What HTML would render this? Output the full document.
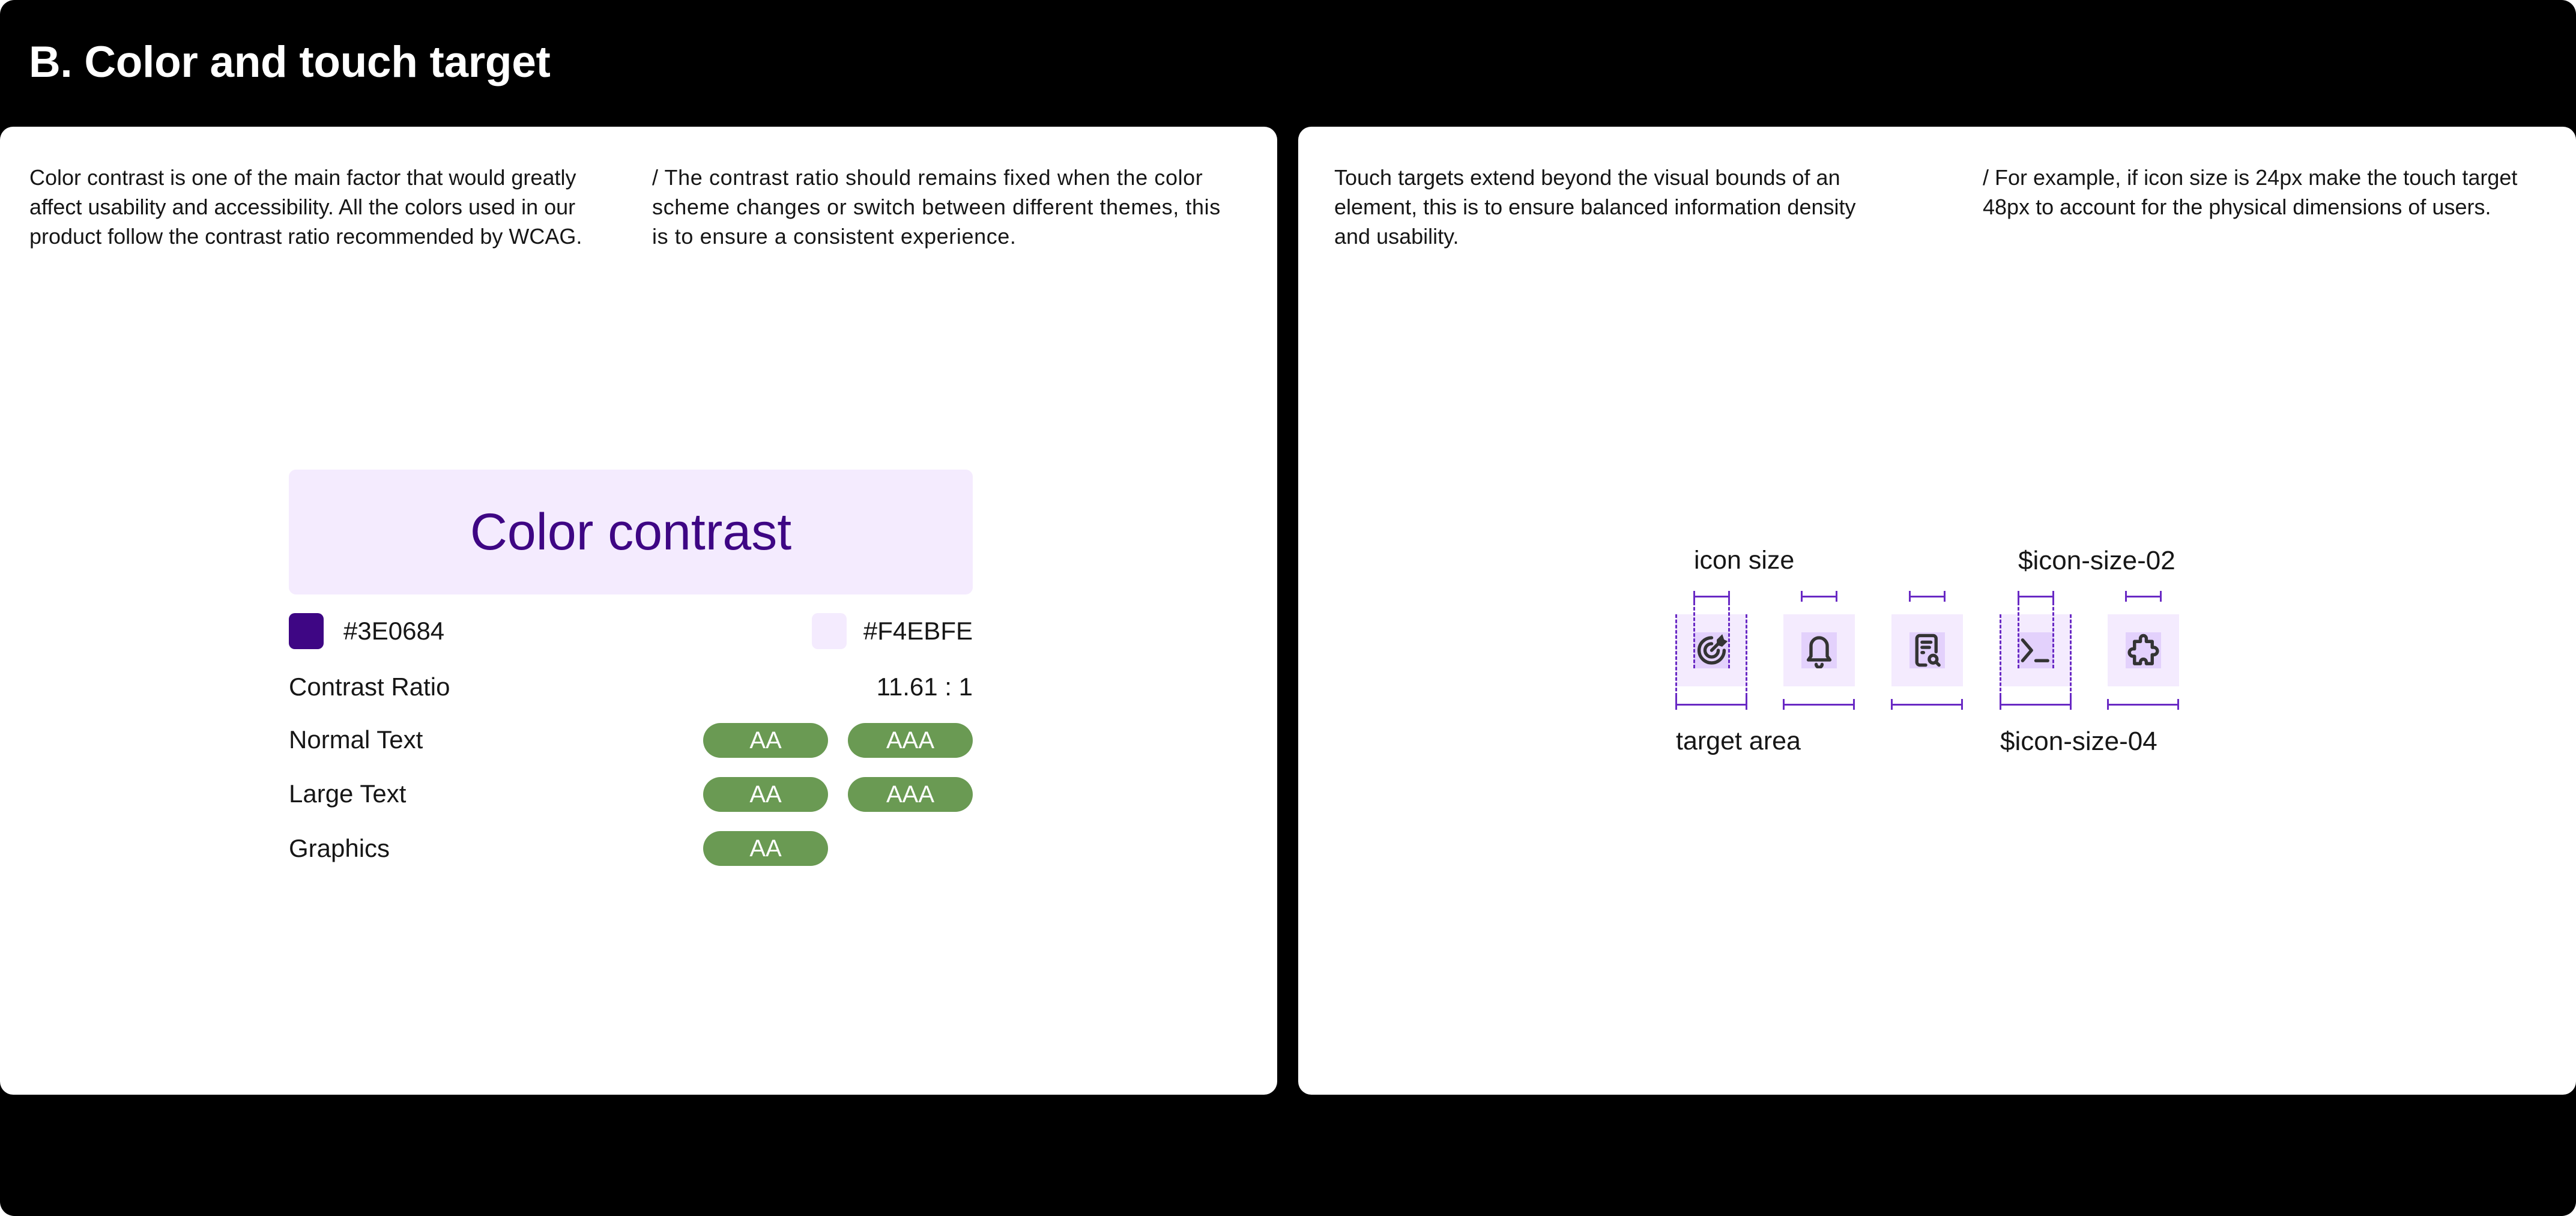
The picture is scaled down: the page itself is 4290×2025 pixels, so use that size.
<!DOCTYPE html>
<html><head><meta charset="utf-8"><style>
*{margin:0;padding:0;box-sizing:border-box}
html,body{width:4290px;height:2025px;background:#fff;overflow:hidden}
body{font-family:"Liberation Sans",sans-serif;color:#161616}
.frame{position:absolute;left:0;top:0;width:4290px;height:2025px;background:#000;border-radius:24px}
.card{position:absolute;top:211px;height:1612px;background:#fff;border-radius:22px}
.t{position:absolute;white-space:nowrap}
.p{font-size:36px;line-height:49px;color:#161616}
.lbl{font-size:42px;color:#161616}
.pill{position:absolute;width:208px;height:58px;border-radius:29px;background:#6A9A53;color:#fff;font-size:40px;line-height:58px;text-align:center}
.ob{position:absolute;width:119px;height:120px;background:#F4EBFE;top:1023px}
.ib{position:absolute;width:59px;height:60px;background:#E3D1FC;top:1053px}
.ib svg{width:59px;height:60px;display:block}
.hl{position:absolute;height:3px;background:#6929C4}
.vl{position:absolute;width:3px;background:#6929C4}
.dl{position:absolute;width:0;border-left:3px dashed #6929C4}
</style></head><body>
<div class="frame"></div>
<div class="t" style="left:48px;top:62px;font-size:73px;font-weight:bold;color:#fff;letter-spacing:-0.3px">B. Color and touch target</div>

<div class="card" style="left:0;width:2127px"></div>
<div class="card" style="left:2162px;width:2128px"></div>

<div class="t p" style="left:49px;top:271px">Color contrast is one of the main factor that would greatly<br>affect usability and accessibility. All the colors used in our<br>product follow the contrast ratio recommended by WCAG.</div>
<div class="t p" style="left:1086px;top:271px;letter-spacing:0.6px">/ The contrast ratio should remains fixed when the color<br>scheme changes or switch between different themes, this<br>is to ensure a consistent experience.</div>
<div class="t p" style="left:2222px;top:271px">Touch targets extend beyond the visual bounds of an<br>element, this is to ensure balanced information density<br>and usability.</div>
<div class="t p" style="left:3302px;top:271px">/ For example, if icon size is 24px make the touch target<br>48px to account for the physical dimensions of users.</div>

<!-- Color contrast -->
<div style="position:absolute;left:481px;top:782px;width:1139px;height:208px;background:#F4EBFE;border-radius:12px;color:#3E0684;font-size:86px;line-height:208px;text-align:center">Color contrast</div>
<div style="position:absolute;left:481px;top:1021px;width:58px;height:60px;background:#3E0684;border-radius:10px"></div>
<div class="t lbl" style="left:572px;top:1027px">#3E0684</div>
<div style="position:absolute;left:1352px;top:1021px;width:58px;height:60px;background:#F4EBFE;border-radius:10px"></div>
<div class="t lbl" style="right:2670px;top:1027px">#F4EBFE</div>
<div class="t lbl" style="left:481px;top:1120px">Contrast Ratio</div>
<div class="t lbl" style="right:2670px;top:1120px">11.61 : 1</div>
<div class="t lbl" style="left:481px;top:1208px">Normal Text</div>
<div class="t lbl" style="left:481px;top:1298px">Large Text</div>
<div class="t lbl" style="left:481px;top:1389px">Graphics</div>
<div class="pill" style="left:1171px;top:1204px">AA</div>
<div class="pill" style="left:1412px;top:1204px">AAA</div>
<div class="pill" style="left:1171px;top:1294px">AA</div>
<div class="pill" style="left:1412px;top:1294px">AAA</div>
<div class="pill" style="left:1171px;top:1384px">AA</div>

<!-- Touch target -->
<div class="t lbl" style="left:2821px;top:909px;font-size:43px">icon size</div>
<div class="t lbl" style="left:3361px;top:909px;font-size:44px">$icon-size-02</div>
<div class="t lbl" style="left:2791px;top:1210px;font-size:43px">target area</div>
<div class="t lbl" style="left:3331px;top:1210px;font-size:44px">$icon-size-04</div>

<div class="ob" style="left:2791px"></div>
<div class="ob" style="left:2970px"></div>
<div class="ob" style="left:3150px"></div>
<div class="ob" style="left:3331px"></div>
<div class="ob" style="left:3510px"></div>

<div class="ib" style="left:2821px"><svg viewBox="0 0 24 24" fill="none" stroke="#333" stroke-width="2.2" stroke-linecap="round"><path d="M12 3.5A8.5 8.5 0 1 0 20.5 12"/><path d="M12 7.5A4.5 4.5 0 1 0 16.5 12"/><path d="M12 12L17 7"/><path d="M16 5l3-3 1 3 2 1-3 3-3-1z" fill="#333" stroke-width="1"/></svg></div>
<div class="ib" style="left:3000px"><svg viewBox="0 0 24 24" fill="none" stroke="#333" stroke-width="2.2" stroke-linecap="round" stroke-linejoin="round"><path d="M6.5 16V9a5.5 5.5 0 0 1 11 0v7l1.8 2.5H4.7z"/><path d="M10 21.5a2 2 0 0 0 4 0"/></svg></div>
<div class="ib" style="left:3180px"><svg viewBox="0 0 24 24" fill="none" stroke="#333" stroke-width="2.2" stroke-linecap="round" stroke-linejoin="round"><path d="M11 22H7a2 2 0 0 1-2-2V4a2 2 0 0 1 2-2h9a2 2 0 0 1 2 2v9"/><path d="M8.5 6.5h6M8.5 10h5M8.5 13.5h1"/><circle cx="16" cy="18" r="2.6"/><path d="M18 20l2 2"/></svg></div>
<div class="ib" style="left:3361px"><svg viewBox="0 0 24 24" fill="none" stroke="#333" stroke-width="2.2" stroke-linecap="round" stroke-linejoin="round"><path d="M3 5l6 7-6 7"/><path d="M12 19h8"/></svg></div>
<div class="ib" style="left:3540px"><svg viewBox="0 0 24 24" fill="none" stroke="#333" stroke-width="2.2" stroke-linejoin="round"><path d="M10 4a2 2 0 0 1 4 0v2h4v4h1a2.5 2.5 0 0 1 0 5h-1v6h-4v-1a2 2 0 0 0-4 0v1H6v-5H5a2.5 2.5 0 0 1 0-5h1V6h4z"/></svg></div>

<!-- top brackets -->
<div class="hl" style="left:2821px;top:992px;width:60px"></div><div class="vl" style="left:2820px;top:984px;height:18px"></div><div class="vl" style="left:2878px;top:984px;height:18px"></div>
<div class="hl" style="left:3000px;top:992px;width:60px"></div><div class="vl" style="left:2999px;top:984px;height:18px"></div><div class="vl" style="left:3057px;top:984px;height:18px"></div>
<div class="hl" style="left:3180px;top:992px;width:60px"></div><div class="vl" style="left:3179px;top:984px;height:18px"></div><div class="vl" style="left:3237px;top:984px;height:18px"></div>
<div class="hl" style="left:3361px;top:992px;width:60px"></div><div class="vl" style="left:3360px;top:984px;height:18px"></div><div class="vl" style="left:3418px;top:984px;height:18px"></div>
<div class="hl" style="left:3540px;top:992px;width:60px"></div><div class="vl" style="left:3539px;top:984px;height:18px"></div><div class="vl" style="left:3597px;top:984px;height:18px"></div>
<!-- bottom brackets -->
<div class="hl" style="left:2791px;top:1172px;width:119px"></div><div class="vl" style="left:2790px;top:1160px;height:22px"></div><div class="vl" style="left:2907px;top:1160px;height:22px"></div>
<div class="hl" style="left:2970px;top:1172px;width:119px"></div><div class="vl" style="left:2969px;top:1164px;height:18px"></div><div class="vl" style="left:3086px;top:1164px;height:18px"></div>
<div class="hl" style="left:3150px;top:1172px;width:119px"></div><div class="vl" style="left:3149px;top:1164px;height:18px"></div><div class="vl" style="left:3266px;top:1164px;height:18px"></div>
<div class="hl" style="left:3331px;top:1172px;width:119px"></div><div class="vl" style="left:3330px;top:1160px;height:22px"></div><div class="vl" style="left:3447px;top:1160px;height:22px"></div>
<div class="hl" style="left:3510px;top:1172px;width:119px"></div><div class="vl" style="left:3509px;top:1164px;height:18px"></div><div class="vl" style="left:3626px;top:1164px;height:18px"></div>
<!-- dashed guides -->
<div class="dl" style="left:2790px;top:1023px;height:137px"></div>
<div class="dl" style="left:2907px;top:1023px;height:137px"></div>
<div class="dl" style="left:2820px;top:1002px;height:111px"></div>
<div class="dl" style="left:2878px;top:1002px;height:111px"></div>
<div class="dl" style="left:3330px;top:1023px;height:137px"></div>
<div class="dl" style="left:3447px;top:1023px;height:137px"></div>
<div class="dl" style="left:3360px;top:1002px;height:111px"></div>
<div class="dl" style="left:3418px;top:1002px;height:111px"></div>
</body></html>
